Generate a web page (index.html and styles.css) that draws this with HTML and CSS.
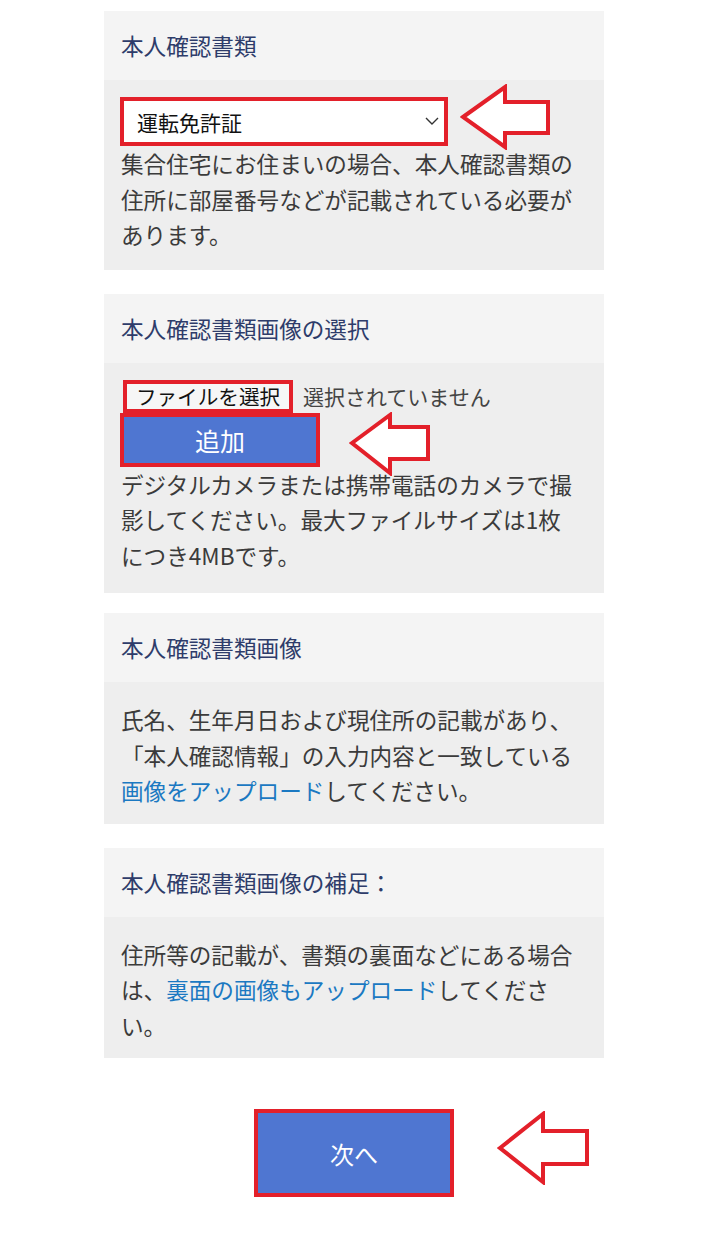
FILE: index.html
```html
<!DOCTYPE html>
<html lang="ja">
<head>
  <meta charset="UTF-8">
  <title>本人確認書類</title>
  <link rel="stylesheet" href="styles.css">
</head>
<body>
  <div class="page">

    <!-- 本人確認書類の種類 -->
    <section class="card">
      <h2 class="card-head">本人確認書類</h2>
      <div class="card-body">
        <div class="select-wrap">
          <select class="doc-select">
            <option>運転免許証</option>
            <option>パスポート</option>
            <option>マイナンバーカード</option>
          </select>
          <svg class="chevron" width="14" height="8" viewBox="0 0 14 8">
            <path d="M1 1 L7 7 L13 1" fill="none" stroke="#333" stroke-width="1.4"/>
          </svg>
        </div>
        <p>集合住宅にお住まいの場合、本人確認書類の住所に部屋番号などが記載されている必要があります。</p>
        <svg class="arrow arrow-select" width="92" height="66" viewBox="0 0 92 66">
          <polygon points="3,33 45,3 45,18 88,18 88,49 45,49 45,63"/>
        </svg>
      </div>
    </section>

    <!-- 画像の選択 -->
    <section class="card card-file">
      <h2 class="card-head">本人確認書類画像の選択</h2>
      <div class="card-body">
        <div class="file-row">
          <label class="file-btn"><input type="file" hidden>ファイルを選択</label>
          <span class="file-name">選択されていません</span>
        </div>
        <button type="button" class="add-btn">追加</button>
        <p>デジタルカメラまたは携帯電話のカメラで撮影してください。最大ファイルサイズは1枚につき4MBです。</p>
        <svg class="arrow arrow-add" width="82" height="64" viewBox="0 0 82 64">
          <polygon points="3,31 41,3 41,15 79,15 79,47 41,47 41,61"/>
        </svg>
      </div>
    </section>

    <section class="card">
      <h2 class="card-head">本人確認書類画像</h2>
      <div class="card-body text-body">
        <p>氏名、生年月日および現住所の記載があり、「本人確認情報」の入力内容と一致している<a href="#">画像をアップロード</a>してください。</p>
      </div>
    </section>

    <section class="card">
      <h2 class="card-head">本人確認書類画像の補足：</h2>
      <div class="card-body text-body">
        <p>住所等の記載が、書類の裏面などにある場合は、<a href="#">裏面の画像もアップロード</a>してください。</p>
      </div>
    </section>

    <div class="footer">
      <button type="submit" class="next-btn">次へ</button>
      <svg class="arrow arrow-next" width="93" height="74" viewBox="0 0 93 74">
        <polygon points="3,37 46,3 46,20 90,20 90,53 46,53 46,71"/>
      </svg>
    </div>

  </div>
</body>
</html>
```

FILE: styles.css
```css
/* Reset básico */
* {
  box-sizing: border-box;
  margin: 0;
  padding: 0;
}

body {
  font-family: "Noto Sans CJK JP", "Noto Sans", sans-serif;
  background: #ffffff;
  color: #3b3b3b;
}

.page {
  width: 500px;
  margin-left: 104px;
  padding-top: 11px;
}

.card {
  margin-bottom: 24px;
}

.card-head {
  height: 69px;
  display: flex;
  align-items: center;
  padding: 0 17px;
  background: #f4f4f4;
  color: #2e3c6a;
  font-size: 22.6px;
  font-weight: normal;
}

.card-body {
  position: relative;
  background: #eeeeee;
  padding: 17px 22px 17px 17px;
}

.card-body p {
  font-size: 22.6px;
  line-height: 35.5px;
}

.text-body {
  padding: 20px 22px 15px 17px;
}

.card-file {
  margin-bottom: 20px;
}

.card-file .card-body {
  padding-bottom: 20px;
}

.card-body a {
  color: #1b79c2;
  text-decoration: none;
}

/* select */
.select-wrap {
  position: relative;
  width: 328px;
  margin-left: -1px;
}

.doc-select {
  appearance: none;
  -webkit-appearance: none;
  display: block;
  width: 100%;
  height: 49px;
  padding: 0 13px;
  border: 4px solid #e3202a;
  border-radius: 0;
  background: #ffffff;
  color: #111;
  font-family: inherit;
  font-size: 21px;
}

.chevron {
  position: absolute;
  right: 9px;
  top: 20px;
  pointer-events: none;
}

/* arquivo */
.file-row {
  display: flex;
  align-items: center;
  gap: 10px;
}

.file-btn {
  width: 170px;
  height: 33px;
  margin-left: 2px;
  display: flex;
  align-items: center;
  justify-content: center;
  border: 4px solid #e3202a;
  background: #f6f6f6;
  color: #111;
  font-size: 20.6px;
  cursor: pointer;
}

.file-name {
  font-size: 21px;
  color: #444;
}

.add-btn {
  display: block;
  width: 200px;
  height: 54px;
  margin-left: -1px;
  border: 4px solid #e3202a;
  background: #4f76d1;
  color: #ffffff;
  font-family: inherit;
  font-size: 25px;
  cursor: pointer;
}

/* setas vermelhas */
.arrow {
  position: absolute;
}

.arrow polygon {
  fill: #ffffff;
  stroke: #e3202a;
  stroke-width: 4;
  stroke-linejoin: miter;
}

.arrow-select {
  left: 356px;
  top: 4px;
}

.arrow-add {
  left: 245px;
  top: 49px;
}

.footer {
  position: relative;
  padding-top: 27px;
  display: flex;
  justify-content: center;
}

.next-btn {
  width: 200px;
  height: 88px;
  border: 4px solid #e3202a;
  background: #4f76d1;
  color: #ffffff;
  font-family: inherit;
  font-size: 24px;
  cursor: pointer;
}

.arrow-next {
  left: 393px;
  top: 29px;
}
```
